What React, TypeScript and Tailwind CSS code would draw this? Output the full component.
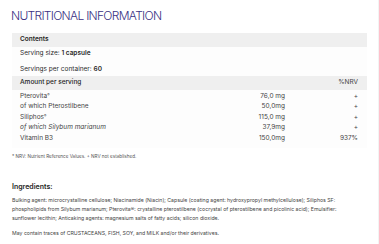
import React from 'react';

type Row = { name: string; amount?: string; nrv?: string; sub?: boolean; italic?: boolean; reg?: boolean };

const groups: Row[][] = [
  [
    { name: 'Pterovita', amount: '76,0 mg', nrv: '+', reg: true },
    { name: 'of which Pterostilbene', amount: '50,0mg', nrv: '+', sub: true },
  ],
  [
    { name: 'Siliphos', amount: '115,0 mg', nrv: '+', reg: true },
    { name: 'of which Silybum marianum', amount: '37,9mg', nrv: '+', sub: true, italic: true },
  ],
  [{ name: 'Vitamin B3', amount: '150,0mg', nrv: '937%' }],
];

const App: React.FC = () => {
  return (
    <div className="w-[379px] h-[244px] overflow-hidden bg-white text-[#2b2b2b] border-r border-[#f3f3f3]" style={{ fontFamily: 'Inter, "Noto Sans", sans-serif' }}>
      <div className="pl-[11px] pr-[12px] pt-[9px]">
        <h1 className="h-[14px] text-[12px] leading-[14px] font-light tracking-[-0.7px] text-[#3a3083]">NUTRITIONAL INFORMATION</h1>

        <div className="mt-[10px] ml-[1px] w-[355px] bg-[#fdfdfd]">
          <div className="h-[14px] bg-[#efefef] pl-[8px] flex items-center text-[6.5px] font-semibold text-[#1e1e1e]">Contents</div>
          <div className="pl-[8px] pt-[1px] pb-[0.5px] text-[6.5px] flex flex-col gap-[5.5px]">
            <div className="h-[11px] flex items-center">Serving size:&nbsp;<span className="font-semibold">1 capsule</span></div>
            <div className="h-[11px] flex items-center">Servings per container:&nbsp;<span className="font-semibold">60</span></div>
          </div>
          <div className="h-[14px] bg-[#efefef] pl-[8px] pr-[9px] flex items-center text-[6.5px] font-medium text-[#1e1e1e]">
            <span className="flex-1">Amount per serving</span>
            <span className="font-normal text-[#444]">%NRV</span>
          </div>
          <div className="pt-[2px] pb-[4px] flex flex-col gap-[1px] text-[6.5px] text-[#444]">
            {groups.map((g, gi) => (
              <div key={gi} className="flex flex-col">
                {g.map((r) => (
                  <div key={r.name} className="h-[10px] flex items-center pl-[8px] pr-[9px]">
                    <span className={`flex-1 ${r.italic ? 'italic' : ''}`}>
                      {r.name}
                      {r.reg && <span className="relative -top-[2px] text-[3.5px]">®</span>}
                    </span>
                    <span className="w-[60px] text-right">{r.amount}</span>
                    <span className="w-[73px] text-right">{r.nrv}</span>
                  </div>
                ))}
              </div>
            ))}
          </div>
        </div>

        <p className="mt-[6px] ml-[1px] text-[4.6px] text-[#555] whitespace-nowrap">* NRV: Nutrient Reference Values. + NRV not established.</p>

        <h2 className="mt-[21px] ml-[1px] text-[7px] font-semibold text-[#1e1e1e]">Ingredients:</h2>
        <div className="mt-[4px] ml-[1px] text-[5.2px] leading-[9px] text-[#444] whitespace-nowrap">
          <div>Bulking agent: microcrystalline cellulose; Niacinamide (Niacin); Capsule (coating agent: hydroxypropyl methylcellulose); Siliphos SF:</div>
          <div>phospholipids from Silybum marianum; Pterovita®: crystalline pterostilbene (cocrystal of pterostilbene and picolinic acid); Emulsifier:</div>
          <div>sunflower lecithin; Anticaking agents: magnesium salts of fatty acids; silicon dioxide.</div>
          <div className="mt-[6px]">May contain traces of CRUSTACEANS, FISH, SOY, and MILK and/or their derivatives.</div>
        </div>
      </div>
    </div>
  );
};

export default App;
